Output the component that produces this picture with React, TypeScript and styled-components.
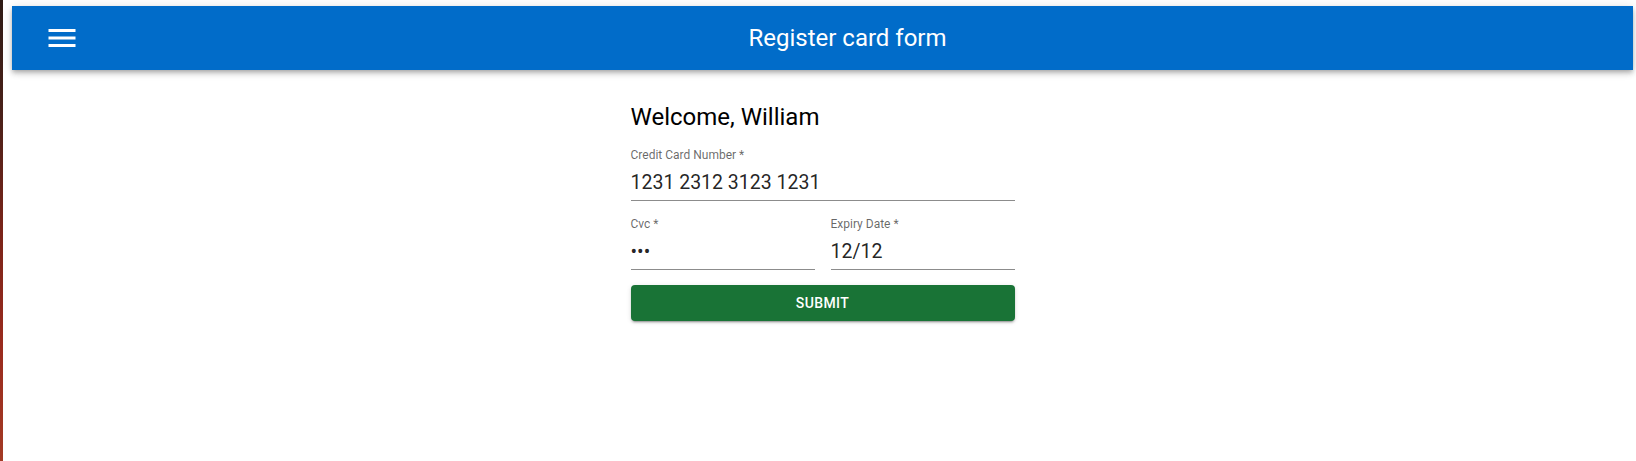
import React from "react";
import styled, { createGlobalStyle } from "styled-components";

const GlobalStyle = createGlobalStyle`
  html, body {
    margin: 0;
    padding: 0;
    background: #ffffff;
    font-family: Roboto, "Liberation Sans", Arial, sans-serif;
  }
  * { box-sizing: border-box; }
`;

const Screen = styled.div`
  display: flex;
  min-height: 461px;
  width: 1636px;
`;

const Wallpaper = styled.div`
  width: 3px;
  flex: 0 0 3px;
  background: linear-gradient(
    180deg,
    #2e1a14 0%,
    #4a2119 25%,
    #7a2419 50%,
    #9a2b1e 75%,
    #a33a24 100%
  );
`;

const Window = styled.div`
  flex: 1;
  padding: 6px 3px 0 9px;
  background: #ffffff;
`;

const AppBar = styled.header`
  height: 64px;
  background: #016cc9;
  color: #ffffff;
  display: flex;
  align-items: center;
  padding: 0 18px 0 32px;
  box-shadow: 0px 2px 4px -1px rgba(0, 0, 0, 0.2),
    0px 4px 5px 0px rgba(0, 0, 0, 0.14), 0px 1px 10px 0px rgba(0, 0, 0, 0.12);
  position: relative;
  z-index: 1;
`;

const MenuButton = styled.button`
  width: 36px;
  height: 36px;
  padding: 0;
  border: 0;
  background: transparent;
  color: #ffffff;
  display: flex;
  align-items: center;
  justify-content: center;
  cursor: pointer;
`;

const Title = styled.h1`
  flex: 1;
  margin: 0;
  text-align: center;
  font-size: 24px;
  font-weight: 400;
  line-height: 64px;
  letter-spacing: 0;
`;

const Form = styled.form`
  width: 384px;
  margin: 31px auto 0;
  display: flex;
  flex-direction: column;
`;

const Welcome = styled.h2`
  margin: 0 0 15px;
  font-size: 24px;
  font-weight: 400;
  line-height: 32px;
  color: #000000;
`;

const Row = styled.div`
  display: grid;
  grid-template-columns: 1fr 1fr;
  gap: 16px;
`;

const Field = styled.label<{ $spaced?: boolean }>`
  display: flex;
  flex-direction: column;
  margin-top: ${(p) => (p.$spaced ? "16px" : "0")};
`;

const Label = styled.span`
  font-size: 12px;
  line-height: 14px;
  color: rgba(0, 0, 0, 0.6);
`;

const Input = styled.input`
  margin-top: 8px;
  border: 0;
  border-bottom: 1px solid #8c8c8c;
  outline: none;
  padding: 0 0 6px;
  height: 31px;
  font-family: Roboto, "Liberation Sans", Arial, sans-serif;
  font-size: 19.5px;
  line-height: 24px;
  color: rgba(0, 0, 0, 0.87);
  background: transparent;
  width: 100%;
`;

const SubmitButton = styled.button`
  margin-top: 15px;
  height: 36px;
  border: 0;
  border-radius: 4px;
  background: #197336;
  color: #ffffff;
  font-family: Roboto, "Liberation Sans", Arial, sans-serif;
  font-size: 14px;
  font-weight: 500;
  letter-spacing: 0.4px;
  text-transform: uppercase;
  box-shadow: 0px 3px 1px -2px rgba(0, 0, 0, 0.2),
    0px 2px 2px 0px rgba(0, 0, 0, 0.14), 0px 1px 5px 0px rgba(0, 0, 0, 0.12);
  cursor: pointer;
`;

const MenuIcon = () => (
  <svg width="36" height="36" viewBox="0 0 24 24" fill="currentColor">
    <path d="M3 18h18v-2H3v2zm0-5h18v-2H3v2zm0-7v2h18V6H3z" />
  </svg>
);

export default function App() {
  return (
    <>
      <GlobalStyle />
      <Screen>
        <Wallpaper />
        <Window>
          <AppBar>
            <MenuButton type="button" aria-label="menu">
              <MenuIcon />
            </MenuButton>
            <Title>Register card form</Title>
          </AppBar>
          <Form onSubmit={(e) => e.preventDefault()}>
            <Welcome>Welcome, William</Welcome>
            <Field>
              <Label>Credit Card Number *</Label>
              <Input defaultValue="1231 2312 3123 1231" />
            </Field>
            <Row>
              <Field $spaced>
                <Label>Cvc *</Label>
                <Input type="password" defaultValue="123" />
              </Field>
              <Field $spaced>
                <Label>Expiry Date *</Label>
                <Input defaultValue="12/12" />
              </Field>
            </Row>
            <SubmitButton type="submit">Submit</SubmitButton>
          </Form>
        </Window>
      </Screen>
    </>
  );
}
